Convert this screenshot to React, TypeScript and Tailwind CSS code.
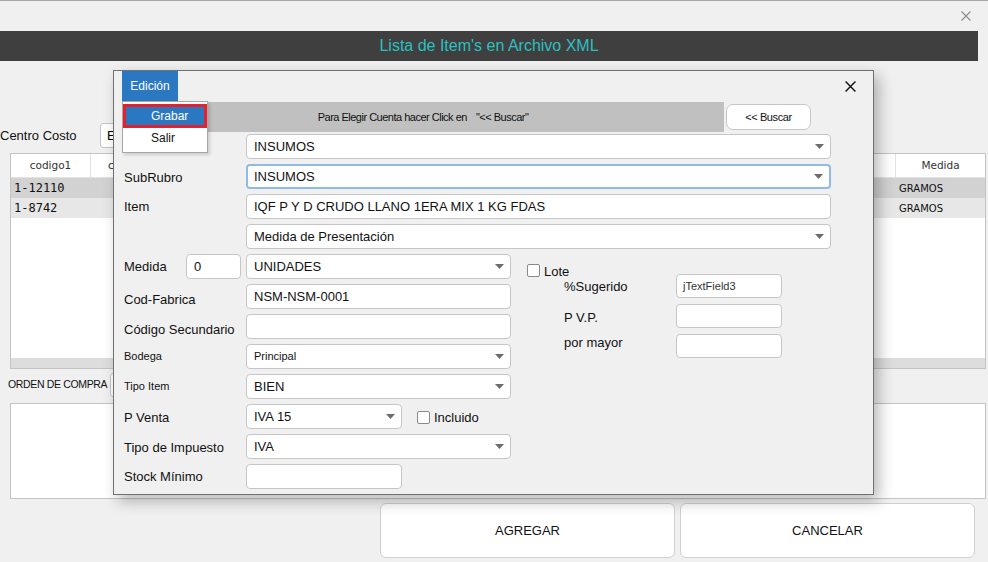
import { twMerge } from "tailwind-merge"
import clsx from "clsx"

const sans = "font-['Liberation_Sans',Arial,sans-serif]"

function CloseIcon({ size, color, stroke }: { size: number; color: string; stroke: number }) {
  return (
    <svg width={size} height={size} viewBox="0 0 10 10">
      <path d="M0.5 0.5L9.5 9.5M9.5 0.5L0.5 9.5" stroke={color} strokeWidth={stroke} fill="none" />
    </svg>
  )
}

function Arrow() {
  return (
    <svg width="9" height="5" viewBox="0 0 9 5" className="shrink-0">
      <path d="M0 0H9L4.5 5Z" fill="#6d6d6d" />
    </svg>
  )
}

interface BoxProps {
  className?: string
  children?: React.ReactNode
  combo?: boolean
  focus?: boolean
}

function Box({ className, children, combo, focus }: BoxProps) {
  return (
    <div
      className={twMerge(
        "h-[25px] shrink-0 bg-white rounded-[4px] flex items-center pl-[7px] pr-[6px] text-[13px] text-[#111]",
        focus ? "border-2 border-[#8fbbe9] pl-[6px]" : "border border-[#c6c6c6]",
        className
      )}
    >
      <div className="flex-1 truncate">{children}</div>
      {combo && <Arrow />}
    </div>
  )
}

function Row({ label, children, labelClass }: { label?: React.ReactNode; children: React.ReactNode; labelClass?: string }) {
  return (
    <div className="flex h-[25px] items-center">
      <div className={twMerge("w-[122px] shrink-0 text-[13px] text-[#111]", labelClass)}>{label}</div>
      {children}
    </div>
  )
}

function Check() {
  return <div className="w-[13px] h-[13px] bg-white border border-[#8a8a8a] rounded-[2px] shrink-0" />
}

export default function App() {
  return (
    <div className={clsx("w-[988px] h-[562px] bg-[#f0f0f0] relative overflow-hidden border-t border-[#a9a9a9]", sans)}>
      {/* window top */}
      <div className="h-[30px] flex items-center justify-end pr-[17px]">
        <CloseIcon size={10} color="#8a8a8a" stroke={1.1} />
      </div>
      <div className="h-[30px] mr-[10px] bg-[#3f3f3f] flex items-center justify-center">
        <span className="text-[16px] text-[#2cc0c0]">Lista de Item's en Archivo XML</span>
      </div>

      {/* Centro costo */}
      <div className="mt-[62px] h-[25px] flex items-center">
        <div className="w-[100px] text-[13px] text-[#111]">Centro Costo</div>
        <div className="w-[160px] h-[25px] bg-white border border-[#c6c6c6] rounded-[3px] text-[13px] pl-[6px] flex items-center">E</div>
      </div>

      {/* table */}
      <div className="ml-[10px] mr-[2px] mt-[5px] h-[216px] border border-[#c4c4c4] bg-white flex flex-col">
        <div className="flex h-[24px] border-b border-[#e2e2e2] text-[10.5px] font-['DejaVu_Sans',sans-serif] text-[#333]">
          <div className="w-[80px] border-r border-[#e2e2e2] flex items-center justify-center">codigo1</div>
          <div className="w-[90px] border-r border-[#e2e2e2] flex items-center pl-[17px]">codigo2</div>
          <div className="flex-1" />
          <div className="w-[90px] border-l border-[#e2e2e2] flex items-center justify-center">Medida</div>
        </div>
        {[
          { c: "1-12110", bg: "bg-[#d2d2d2]" },
          { c: "1-8742", bg: "bg-[#e7e7e7]" },
        ].map((r) => (
          <div key={r.c} className={clsx("flex h-[20px] items-center", r.bg)}>
            <div className="flex-1 pl-[3px] text-[12px] font-['DejaVu_Sans_Mono',monospace] text-[#111]">{r.c}</div>
            <div className="w-[90px] pl-[4px] text-[10px] font-['DejaVu_Sans',sans-serif] text-[#111]">GRAMOS</div>
          </div>
        ))}
        <div className="flex-1" />
        <div className="h-[10px] bg-[#dddddd]" />
      </div>

      {/* orden de compra */}
      <div className="mt-[4px] h-[24px] flex items-center">
        <div className="w-[110px] pl-[8px] text-[10.5px] text-[#111] whitespace-nowrap tracking-[-0.35px]">ORDEN DE COMPRA</div>
        <div className="w-[120px] h-[24px] bg-white border border-[#c6c6c6] rounded-[3px]" />
      </div>
      <div className="mt-[6px] ml-[10px] mr-[2px] h-[96px] bg-white border border-[#c4c4c4]" />

      {/* buttons */}
      <div className="mt-[4px] ml-[380px] flex gap-[5px]">
        <button className="w-[295px] h-[55px] bg-white border border-[#d0d0d0] rounded-[6px] text-[13px] text-[#111]">AGREGAR</button>
        <button className="w-[295px] h-[55px] bg-white border border-[#d0d0d0] rounded-[6px] text-[13px] text-[#111]">CANCELAR</button>
      </div>

      {/* dialog */}
      <div className="absolute left-[113px] top-[69px] w-[761px] h-[425px] border border-[#707070] bg-[#f0f0f0] shadow-[5px_6px_14px_rgba(0,0,0,0.28)]">
        <div className="h-[30px] flex items-center">
          <div className="ml-[8px] w-[56px] h-[30px] bg-[#2b78c2] text-white text-[12px] flex items-center justify-center">Edición</div>
          <div className="flex-1" />
          <div className="mr-[17px]">
            <CloseIcon size={11} color="#111" stroke={1.3} />
          </div>
        </div>

        <div className="mt-[1px] h-[30px] flex items-center">
          <div className="ml-[8px] w-[602px] h-[30px] bg-[#c0c0c0] flex items-center justify-center text-[11px] tracking-[-0.5px] text-[#111]">
            <span>Para Elegir Cuenta hacer Click en</span>
            <span className="ml-[9px]">"&lt;&lt; Buscar"</span>
          </div>
          <div className="ml-[2px] w-[85px] h-[26px] bg-white border border-[#c6c6c6] rounded-[7px] flex items-center justify-center text-[11px] tracking-[-0.4px] text-[#111]">
            &lt;&lt; Buscar
          </div>
        </div>

        {/* form */}
        <div className="mt-[2px] pl-[10px] flex flex-col gap-[5px]">
          <Row>
            <Box combo className="w-[585px]">INSUMOS</Box>
          </Row>
          <Row label="SubRubro" labelClass="pt-[2px]">
            <Box combo focus className="w-[585px]">INSUMOS</Box>
          </Row>
          <Row label="Item">
            <Box className="w-[585px]">IQF P Y D CRUDO LLANO 1ERA MIX 1 KG FDAS</Box>
          </Row>
          <Row>
            <Box combo className="w-[585px]">Medida de Presentación</Box>
          </Row>

          <div className="flex">
            <div className="flex flex-col gap-[5px]">
              <div className="flex h-[25px] items-center">
                <div className="w-[62px] text-[13px] text-[#111]">Medida</div>
                <Box className="w-[55px]">0</Box>
                <div className="w-[5px]" />
                <Box combo className="w-[265px]">UNIDADES</Box>
              </div>
              <Row label="Cod-Fabrica" labelClass="pt-[6px]">
                <Box className="w-[265px]">NSM-NSM-0001</Box>
              </Row>
              <Row label="Código Secundario" labelClass="pt-[6px]">
                <Box className="w-[265px]" />
              </Row>
              <Row label="Bodega" labelClass="text-[11px]">
                <Box combo className="w-[265px] text-[11px]">Principal</Box>
              </Row>
              <Row label="Tipo Item" labelClass="text-[11px]">
                <Box combo className="w-[265px]">BIEN</Box>
              </Row>
              <Row label="P Venta" labelClass="pt-[2px]">
                <Box combo className="w-[156px]">IVA 15</Box>
                <div className="ml-[15px] flex items-center gap-[4px] pt-[2px]">
                  <Check />
                  <span className="text-[13px] text-[#111]">Incluido</span>
                </div>
              </Row>
              <Row label="Tipo de Impuesto" labelClass="pt-[2px]">
                <Box combo className="w-[265px]">IVA</Box>
              </Row>
              <Row label="Stock Mínimo" labelClass="pt-[1px]">
                <Box className="w-[156px]" />
              </Row>
            </div>

            {/* right panel */}
            <div className="ml-[16px] flex flex-col">
              <div className="mt-[10px] h-[13px] flex items-center gap-[4px]">
                <Check />
                <span className="text-[13px] text-[#111] pt-[2px]">Lote</span>
              </div>
              <div className="-mt-[3px] flex flex-col gap-[6px]">
                {[
                  { l: "%Sugerido", v: "jTextField3", pad: "pt-[2px]" },
                  { l: "P V.P.", v: "", pad: "pt-[3px]" },
                  { l: "por mayor", v: "", pad: "-mt-[7px]" },
                ].map((r) => (
                  <div key={r.l} className="flex h-[24px] items-center">
                    <div className={clsx("w-[149px] pl-[37px] text-[13px] text-[#111]", r.pad)}>{r.l}</div>
                    <div className="w-[106px] h-[24px] bg-white border border-[#c6c6c6] rounded-[4px] pl-[6px] flex items-center text-[11px] text-[#333]">
                      {r.v}
                    </div>
                  </div>
                ))}
              </div>
            </div>
          </div>
        </div>

        {/* menu dropdown */}
        <div className="absolute left-[8px] top-[30px] w-[86px] h-[52px] bg-white border border-[#a6a6a6] shadow-[2px_2px_3px_rgba(0,0,0,0.15)] pt-[2px]">
          <div className="h-[24px] border-[3px] border-[#e4202c] bg-[#2b78c2] text-white text-[12px] flex items-center pl-[25px]">Grabar</div>
          <div className="h-[20px] text-[12px] text-[#111] flex items-center pl-[28px]">Salir</div>
        </div>
      </div>
    </div>
  )
}
